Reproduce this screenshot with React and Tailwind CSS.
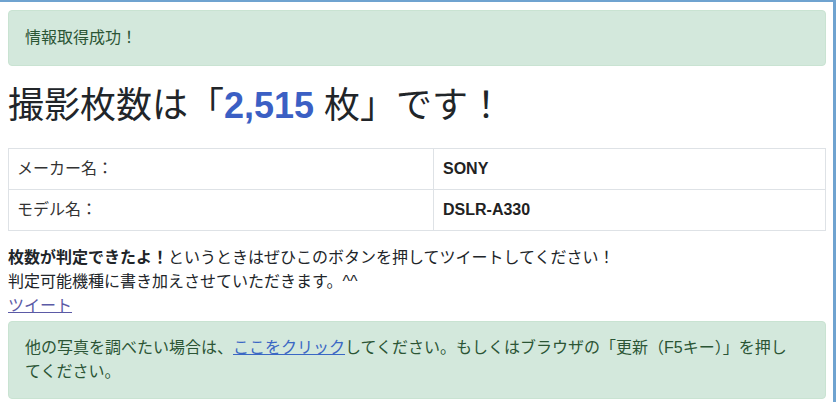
export default function App() {
  const font = { fontFamily: '"Liberation Sans", "Noto Sans CJK JP", sans-serif' };
  return (
    <div
      className="h-[402px] w-[836px] overflow-hidden border-t-2 border-r-[3px] border-[#6fa3d0] bg-white pl-2 pr-[7px] pt-2 text-[16px] leading-6 text-[#212529]"
      style={font}
    >
      <div className="rounded border border-[#c9e3d2] bg-[#d3e8dc] px-4 py-[15px] text-[#2b5535]">
        情報取得成功！
      </div>

      <h1 className="mt-4 text-[36px] leading-[48px] font-normal text-[#212529]">
        撮影枚数は「<span className="font-bold text-[#3b5fc4]">2,515</span> 枚」です！
      </h1>

      <table className="mt-[18px] w-full border-collapse">
        <tbody>
          <tr>
            <td className="w-[425px] border border-[#dee2e6] px-2 py-2 text-[#333]">メーカー名：</td>
            <td className="border border-[#dee2e6] px-[9px] py-2 font-bold text-[#222]">SONY</td>
          </tr>
          <tr>
            <td className="border border-[#dee2e6] px-2 py-2 text-[#333]">モデル名：</td>
            <td className="border border-[#dee2e6] px-[9px] py-2 font-bold text-[#222]">DSLR-A330</td>
          </tr>
        </tbody>
      </table>

      <div className="mt-[15px]">
        <p>
          <b>枚数が判定できたよ！</b>というときはぜひこのボタンを押してツイートしてください！
        </p>
        <p>判定可能機種に書き加えさせていただきます。^^</p>
        <a href="#" className="text-[#5b5aa6] underline">ツイート</a>
      </div>

      <div className="mt-[3px] rounded border border-[#c9e3d2] bg-[#d3e8dc] px-4 py-[14px] text-[#2b5535]">
        他の写真を調べたい場合は、<a href="#" className="text-[#3a67c4] underline">ここをクリック</a>してください。もしくはブラウザの「更新（F5キー）」を押し<br />てください。
      </div>
    </div>
  );
}
